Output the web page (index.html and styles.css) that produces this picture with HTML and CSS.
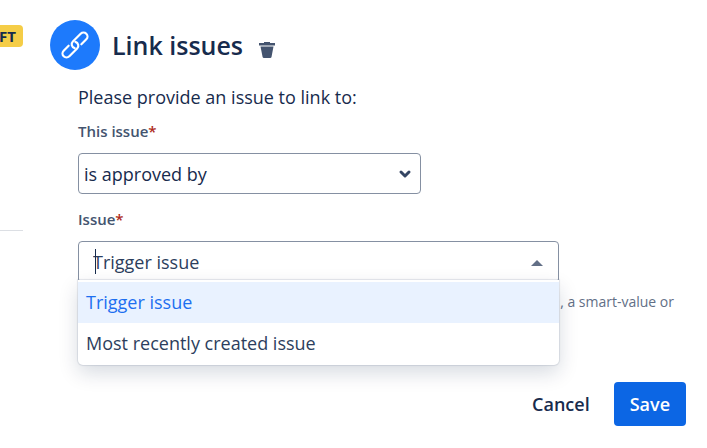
FILE: index.html
```html
<!DOCTYPE html>
<html lang="en">
<head>
    <meta charset="UTF-8">
    <meta name="viewport" content="width=device-width, initial-scale=1.0">
    <title>Link issues</title>
    <link rel="stylesheet" href="styles.css">
</head>
<body>
    <div class="page">
        <aside class="sidebar">
            <div class="sidebar-top"><span class="badge">FT</span></div>
        </aside>
        <main class="panel">
            <header class="header">
                <span class="header-icon">
                    <svg width="32" height="32" viewBox="0 0 32 32" fill="none" stroke="#fff" stroke-width="2.2" stroke-linecap="round" stroke-linejoin="round">
                        <g transform="rotate(-45 16 16)">
                            <path d="M11 12H4a4 4 0 0 0 0 8H15a4 4 0 0 0 3.500-6"/>
                            <path d="M21 20h7a4 4 0 0 0 0-8H17a4 4 0 0 0-3.500 6"/>
                        </g>
                    </svg>
                </span>
                <h1 class="title">Link issues</h1>
                <button class="delete" type="button" aria-label="Delete">
                    <svg width="18" height="18" viewBox="0 0 18 18" fill="#44546f">
                        <path d="M1 2h5V1h6v1h5v2.500H1z"/>
                        <path d="M2.500 5.500h13l-2 10.500q-.2 1-1.400 1H6q-1.200 0-1.400-1z"/>
                    </svg>
                </button>
            </header>
            <form class="form">
                <p class="intro">Please provide an issue to link to:</p>
                <label class="label" for="link-type">This issue<span class="required">*</span></label>
                <div class="select-wrap">
                    <select class="select" id="link-type">
                        <option>is approved by</option>
                    </select>
                    <svg class="chevron" width="14" height="10" viewBox="0 0 14 10" fill="none" stroke="#344563" stroke-width="3" stroke-linecap="round" stroke-linejoin="round">
                        <path d="M3 3l4 4 4-4"/>
                    </svg>
                </div>
                <label class="label" for="issue">Issue<span class="required">*</span></label>
                <div class="combo">
                    <input class="combo-input" id="issue" type="text" value="Trigger issue" role="combobox" aria-expanded="true" aria-controls="issue-list">
                    <span class="caret"></span>
                    <svg class="arrow" width="12" height="6" viewBox="0 0 12 6" fill="#626f86">
                        <path d="M0 6l6-6 6 6z"/>
                    </svg>
                    <ul class="menu" id="issue-list" role="listbox">
                        <li class="option selected" role="option" aria-selected="true">Trigger issue</li>
                        <li class="option" role="option" aria-selected="false">Most recently created issue</li>
                    </ul>
                </div>
                <p class="help">, a smart-value or</p>
                <div class="actions">
                    <button class="button" type="button">Cancel</button>
                    <button class="button primary" type="submit">Save</button>
                </div>
            </form>
        </main>
    </div>
</body>
</html>
```
FILE: styles.css
```css
* {
    box-sizing: border-box;
}
body {
    margin: 0;
    font-family: "Open Sans", "Noto Sans", sans-serif;
    font-size: 18px;
    color: #172b4d;
    background: #fff;
}
.page {
    display: flex;
}
.sidebar {
    width: 23px;
    flex: none;
    overflow: hidden;
}
.sidebar-top {
    display: flex;
    justify-content: flex-end;
    height: 231px;
    padding-top: 25px;
    border-bottom: 1px solid #dcdfe4;
}
.badge {
    height: 22px;
    padding: 0 7px;
    border-radius: 4px;
    background: #f5cd47;
    font-size: 15px;
    font-weight: 700;
    line-height: 22px;
}
.panel {
    flex: 1;
    min-width: 0;
    padding: 20px 21px 20px 27px;
}
.header {
    display: flex;
    align-items: center;
}
.header-icon {
    display: flex;
    align-items: center;
    justify-content: center;
    width: 50px;
    height: 50px;
    border-radius: 50%;
    background: #1d7afc;
}
.title {
    margin: 0 15px 0 12px;
    font-size: 25px;
    font-weight: 600;
    line-height: 50px;
}
.delete {
    display: flex;
    margin-top: 10px;
    padding: 0;
    border: none;
    background: none;
    cursor: pointer;
}
.form {
    padding: 14px 0 0 28px;
}
.intro {
    margin: 0 0 10px;
    line-height: 27px;
}
.label {
    display: block;
    margin-bottom: 12px;
    color: #44546f;
    font-size: 15px;
    font-weight: 600;
    line-height: 20px;
}
.required {
    color: #ae2a19;
}
.select-wrap {
    position: relative;
    max-width: 343px;
    margin-bottom: 15px;
}
.select {
    display: block;
    width: 100%;
    height: 41px;
    padding: 0 32px 0 5px;
    border: 1px solid #8590a2;
    border-radius: 4px;
    background: #fff;
    color: inherit;
    font: inherit;
    appearance: none;
}
.chevron {
    position: absolute;
    top: 16px;
    right: 9px;
    pointer-events: none;
}
.combo {
    position: relative;
    max-width: 481px;
}
.combo-input {
    display: block;
    width: 100%;
    height: 42px;
    padding: 0 40px 0 14px;
    border: 1px solid #8590a2;
    border-radius: 4px;
    background: #fff;
    color: #2c3e5d;
    font: inherit;
}
.caret {
    position: absolute;
    top: 8px;
    left: 17px;
    width: 1px;
    height: 25px;
    background: #172b4d;
}
.arrow {
    position: absolute;
    top: 19px;
    right: 16px;
}
.menu {
    position: absolute;
    top: 39px;
    left: 0;
    right: 0;
    margin: 0;
    padding: 2px 0 1px;
    list-style: none;
    background: #fff;
    border-radius: 0 0 5px 5px;
    box-shadow: 0 0 1px 1px rgba(9, 30, 66, 0.1), 0 8px 20px rgba(9, 30, 66, 0.16);
}
.option {
    padding: 0 8px;
    color: #2c3e5d;
    line-height: 41px;
}
.option.selected {
    background: #e9f2ff;
    color: #1d6ff0;
}
.help {
    margin: 8px 12px 0 0;
    color: #626f86;
    font-size: 14px;
    line-height: 22px;
    text-align: right;
}
.actions {
    display: flex;
    justify-content: flex-end;
    gap: 8px;
    margin-top: 69px;
}
.button {
    height: 44px;
    padding: 0 16px;
    border: none;
    border-radius: 4px;
    background: none;
    color: inherit;
    font: inherit;
    font-weight: 600;
    cursor: pointer;
}
.button.primary {
    background: #0c66e4;
    color: #fff;
}
```
